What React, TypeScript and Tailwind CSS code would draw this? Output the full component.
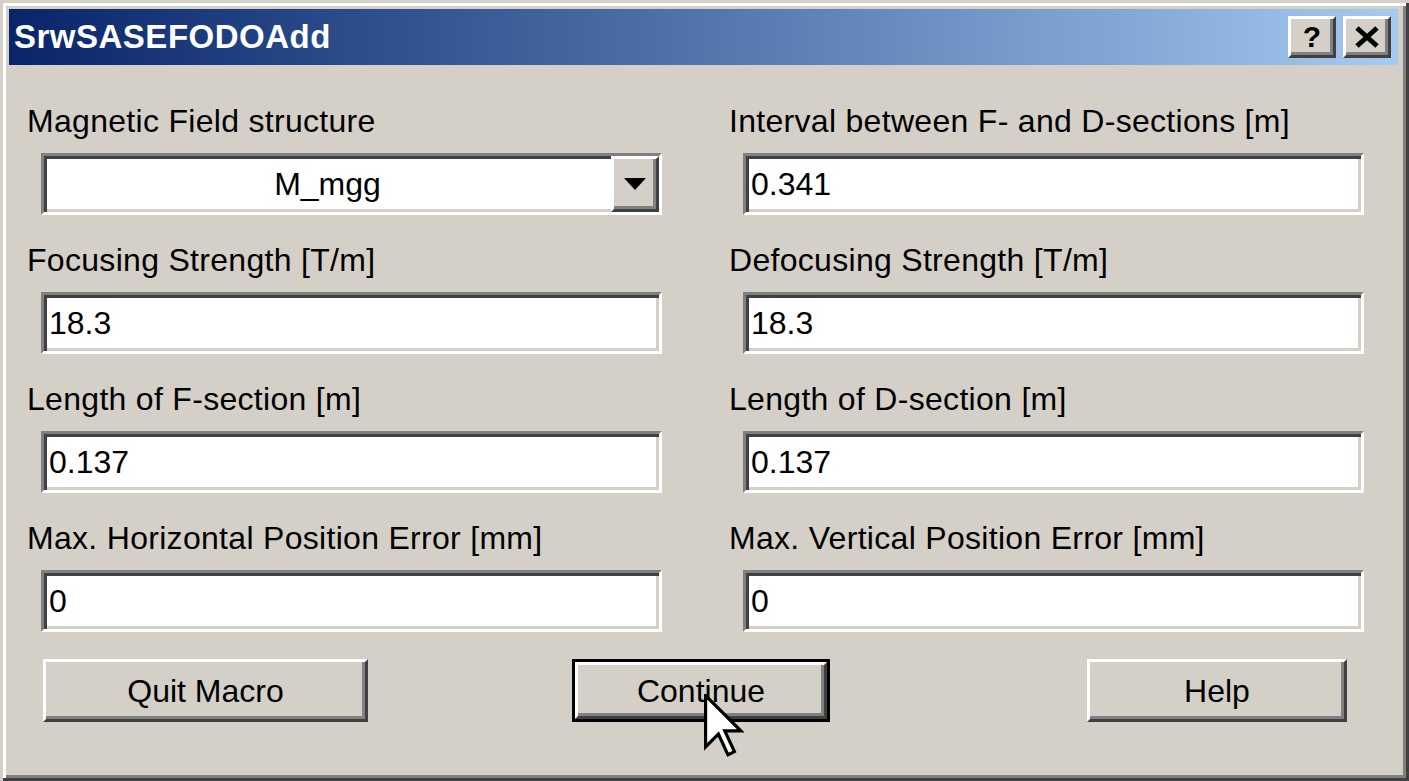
import React from 'react';

const fields = [
  { left: 'Magnetic Field structure', leftValue: 'M_mgg', right: 'Interval between F- and D-sections [m]', rightValue: '0.341', select: true },
  { left: 'Focusing Strength [T/m]', leftValue: '18.3', right: 'Defocusing Strength [T/m]', rightValue: '18.3' },
  { left: 'Length of F-section [m]', leftValue: '0.137', right: 'Length of D-section [m]', rightValue: '0.137' },
  { left: 'Max. Horizontal Position Error [mm]', leftValue: '0', right: 'Max. Vertical Position Error [mm]', rightValue: '0' },
];

const sunken =
  'h-[62px] w-[621px] border-[3px] border-t-[#808080] border-l-[#808080] border-r-white border-b-white bg-white shadow-[inset_3px_3px_0_#404040,inset_-3px_-3px_0_#d4d0c8]';

const raised =
  'border-[3px] border-t-white border-l-white border-r-[#404040] border-b-[#404040] bg-[#d4d0c8] shadow-[inset_-3px_-3px_0_#808080]';

function TextField({ value }: { value: string }) {
  return (
    <div className={`ml-[14px] flex items-center pl-[5px] ${sunken}`}>
      <span className="leading-none">{value}</span>
    </div>
  );
}

function SelectField({ value }: { value: string }) {
  return (
    <div className={`ml-[14px] flex items-stretch ${sunken}`}>
      <div className="flex flex-1 items-center justify-center leading-none">{value}</div>
      <div className={`flex w-[48px] items-center justify-center ${raised}`}>
        <svg width="22" height="12" viewBox="0 0 22 12">
          <polygon points="0,0 22,0 11,12" fill="#000" />
        </svg>
      </div>
    </div>
  );
}

function Column({ label, value, select }: { label: string; value: string; select?: boolean }) {
  return (
    <div className="flex flex-col">
      <div className="mb-[14px] h-[36px] leading-[36px] tracking-[0.3px] whitespace-nowrap">{label}</div>
      {select ? <SelectField value={value} /> : <TextField value={value} />}
    </div>
  );
}

function CaptionButton({ children }: { children: React.ReactNode }) {
  return (
    <div className={`flex h-[42px] w-[48px] items-center justify-center ${raised}`}>{children}</div>
  );
}

export default function App() {
  return (
    <div
      className="relative h-[781px] w-[1409px] overflow-hidden bg-[#d4d0c8] pt-[9px] pr-[11px] pb-[11px] pl-[9px] text-[32px] text-black shadow-[inset_3px_3px_0_#d4d0c8,inset_-3px_-3px_0_#404040,inset_6px_6px_0_#ffffff,inset_-6px_-6px_0_#808080]"
      style={{ fontFamily: '"Liberation Sans", Arial, sans-serif' }}
    >
      {/* title bar */}
      <div className="flex h-[56px] items-center justify-between bg-gradient-to-r from-[#0a246a] to-[#a6caf0] pr-[7px] pl-[5px]">
        <span className="text-[33px] font-bold tracking-[0.5px] text-white">SrwSASEFODOAdd</span>
        <div className="flex gap-[7px]">
          <CaptionButton>
            <span className="text-[30px] leading-none font-bold">?</span>
          </CaptionButton>
          <CaptionButton>
            <svg width="26" height="22" viewBox="0 0 26 22">
              <path d="M3 2 L23 20 M23 2 L3 20" stroke="#000" strokeWidth="5" />
            </svg>
          </CaptionButton>
        </div>
      </div>

      {/* body */}
      <div className="flex flex-col pt-[38px] pl-[18px]">
        <div className="flex flex-col gap-[27px]">
          {fields.map((f) => (
            <div key={f.left} className="grid grid-cols-[702px_702px]">
              <Column label={f.left} value={f.leftValue} select={f.select} />
              <Column label={f.right} value={f.rightValue} />
            </div>
          ))}
        </div>

        <div className="mt-[27px] flex">
          <div className={`ml-[16px] flex h-[63px] w-[325px] items-center justify-center ${raised}`}>Quit Macro</div>
          <div className="ml-[204px] h-[63px] w-[258px] border-[3px] border-black">
            <div className={`flex h-full w-full items-center justify-center ${raised}`}>Continue</div>
          </div>
          <div className={`ml-[257px] flex h-[63px] w-[260px] items-center justify-center ${raised}`}>Help</div>
        </div>
      </div>

      {/* mouse pointer */}
      <svg className="absolute top-[694px] left-[704px]" width="40" height="64" viewBox="0 0 12.5 20">
        <polygon
          points="0.5,0.5 0.5,16.5 4.5,12.5 7.5,19 9.5,18 6.5,11.5 11.5,11.5"
          fill="#fff"
          stroke="#000"
          strokeWidth="1"
          strokeLinejoin="miter"
        />
      </svg>
    </div>
  );
}
